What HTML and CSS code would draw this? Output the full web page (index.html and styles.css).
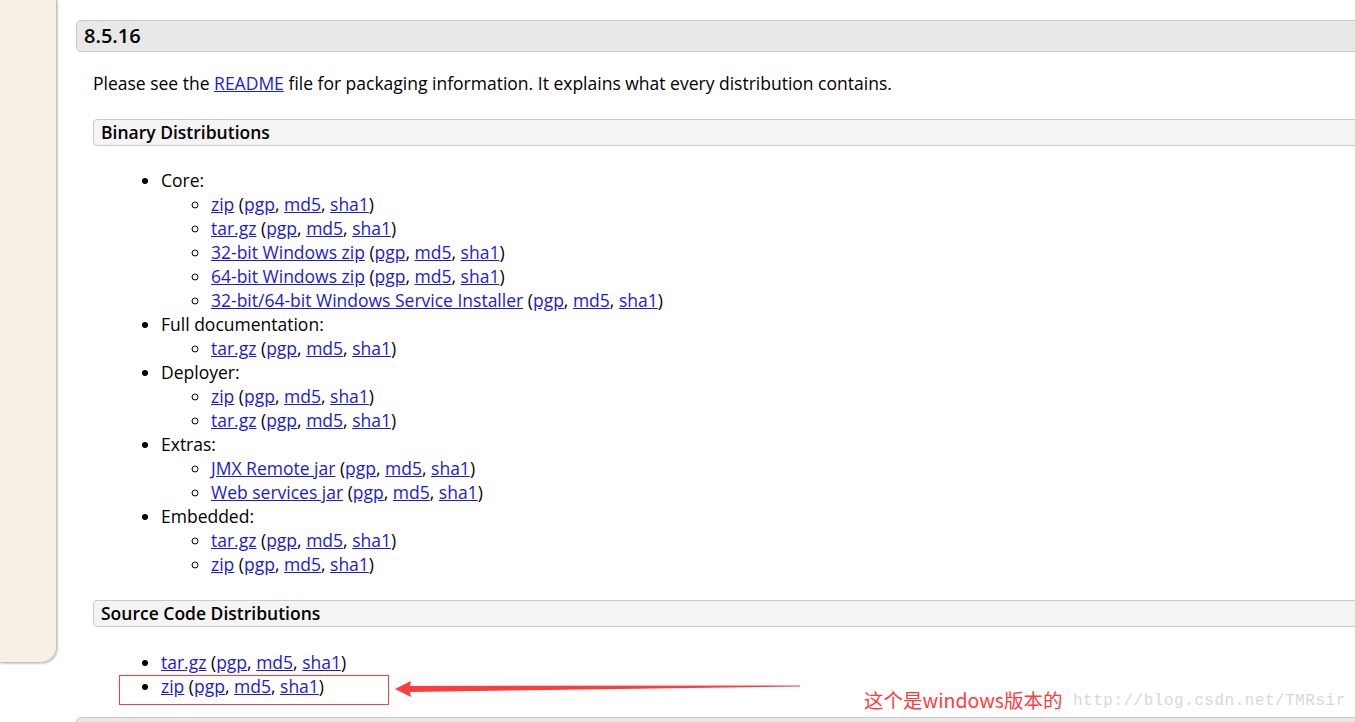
FILE: index.html
```html
<!DOCTYPE html>
<html>
<head>
<meta charset="utf-8">
<link rel="stylesheet" href="styles.css">
</head>
<body>
<div class="page">
  <aside class="sidebar"></aside>
  <main class="main">
    <h3 class="version">8.5.16</h3>
    <div class="section">
      <p class="intro">Please see the <a href="#">README</a> file for packaging information. It explains what every distribution contains.</p>
      <h4 class="sub">Binary Distributions</h4>
      <ul class="dist">
        <li>Core:
          <ul>
            <li><a href="#">zip</a> (<a href="#">pgp</a>, <a href="#">md5</a>, <a href="#">sha1</a>)</li>
            <li><a href="#">tar.gz</a> (<a href="#">pgp</a>, <a href="#">md5</a>, <a href="#">sha1</a>)</li>
            <li><a href="#">32-bit Windows zip</a> (<a href="#">pgp</a>, <a href="#">md5</a>, <a href="#">sha1</a>)</li>
            <li><a href="#">64-bit Windows zip</a> (<a href="#">pgp</a>, <a href="#">md5</a>, <a href="#">sha1</a>)</li>
            <li><a href="#">32-bit/64-bit Windows Service Installer</a> (<a href="#">pgp</a>, <a href="#">md5</a>, <a href="#">sha1</a>)</li>
          </ul>
        </li>
        <li>Full documentation:
          <ul>
            <li><a href="#">tar.gz</a> (<a href="#">pgp</a>, <a href="#">md5</a>, <a href="#">sha1</a>)</li>
          </ul>
        </li>
        <li>Deployer:
          <ul>
            <li><a href="#">zip</a> (<a href="#">pgp</a>, <a href="#">md5</a>, <a href="#">sha1</a>)</li>
            <li><a href="#">tar.gz</a> (<a href="#">pgp</a>, <a href="#">md5</a>, <a href="#">sha1</a>)</li>
          </ul>
        </li>
        <li>Extras:
          <ul>
            <li><a href="#">JMX Remote jar</a> (<a href="#">pgp</a>, <a href="#">md5</a>, <a href="#">sha1</a>)</li>
            <li><a href="#">Web services jar</a> (<a href="#">pgp</a>, <a href="#">md5</a>, <a href="#">sha1</a>)</li>
          </ul>
        </li>
        <li>Embedded:
          <ul>
            <li><a href="#">tar.gz</a> (<a href="#">pgp</a>, <a href="#">md5</a>, <a href="#">sha1</a>)</li>
            <li><a href="#">zip</a> (<a href="#">pgp</a>, <a href="#">md5</a>, <a href="#">sha1</a>)</li>
          </ul>
        </li>
      </ul>
      <h4 class="sub">Source Code Distributions</h4>
      <ul class="dist src">
        <li><a href="#">tar.gz</a> (<a href="#">pgp</a>, <a href="#">md5</a>, <a href="#">sha1</a>)</li>
        <li><a href="#">zip</a> (<a href="#">pgp</a>, <a href="#">md5</a>, <a href="#">sha1</a>)</li>
      </ul>
    </div>
    <h3 class="version next">&nbsp;</h3>
  </main>
</div>
<div class="mark-box"></div>
<svg class="mark-arrow" width="410" height="20" viewBox="0 0 410 20">
  <polygon points="0,10 16,2 15,7 405,6.5 405,7.5 15,13 16,18" fill="#ff3b3b"/>
</svg>
<div class="mark-note">这个是windows版本的</div>
<div class="watermark">http://blog.csdn.net/TMRsir</div>
</body>
</html>
```
FILE: styles.css
```css
html, body {
  margin: 0;
  padding: 0;
  background: #fff;
  overflow: hidden;
  width: 1355px;
  height: 722px;
}
body {
  font-family: "Open Sans", "Noto Sans", sans-serif;
  font-size: 17.5px;
  color: #000;
}
a { color: #1a1ad8; }
.page {
  display: flex;
  align-items: flex-start;
  gap: 19px;
}
.sidebar {
  flex: 0 0 56px;
  height: 662px;
  background: #f7f1e5;
  border-right: 1px solid #c9c4bb;
  border-bottom: 1px solid #c9c4bb;
  border-bottom-right-radius: 16px;
  box-shadow: 1px 1px 2px rgba(0,0,0,0.2);
}
.main {
  flex: 1;
  margin-right: -20px;
  padding-top: 20px;
}
.version {
  margin: 0;
  height: 30px;
  line-height: 30px;
  padding-left: 7px;
  background: #e8e8e8;
  border: 1px solid #cacaca;
  border-radius: 5px 0 0 5px;
  font-size: 20px;
  font-weight: 600;
}
.version.next {
  margin-top: 19px;
}
.section {
  padding-left: 17px;
}
.intro {
  margin: 19px 0 0;
  line-height: 24px;
}
.sub {
  margin: 24px 0 0;
  height: 25px;
  line-height: 25px;
  padding-left: 7px;
  background: #f4f4f4;
  border: 1px solid #cacaca;
  border-radius: 4px 0 0 4px;
  font-size: 17.5px;
  font-weight: 600;
}
.dist {
  margin: 22px 0 0;
  padding-left: 68px;
  line-height: 24px;
}
.dist ul {
  margin: 0;
  padding-left: 50px;
  list-style-type: circle;
}
.dist.src {
  margin-top: 23px;
}
.mark-box {
  position: absolute;
  left: 119px;
  top: 675px;
  width: 268px;
  height: 28px;
  border: 1px solid #ff3b3b;
}
.mark-arrow {
  position: absolute;
  left: 395px;
  top: 679px;
}
.mark-note {
  position: absolute;
  left: 864px;
  top: 688px;
  color: #ff3b3b;
  font-family: "Noto Sans CJK SC", sans-serif;
  font-size: 19.5px;
  line-height: 24px;
}
.watermark {
  position: absolute;
  left: 1073px;
  top: 689px;
  color: #d8d8d8;
  font-family: "Liberation Mono", monospace;
  font-size: 16px;
  line-height: 24px;
  letter-spacing: 0.5px;
}
```
